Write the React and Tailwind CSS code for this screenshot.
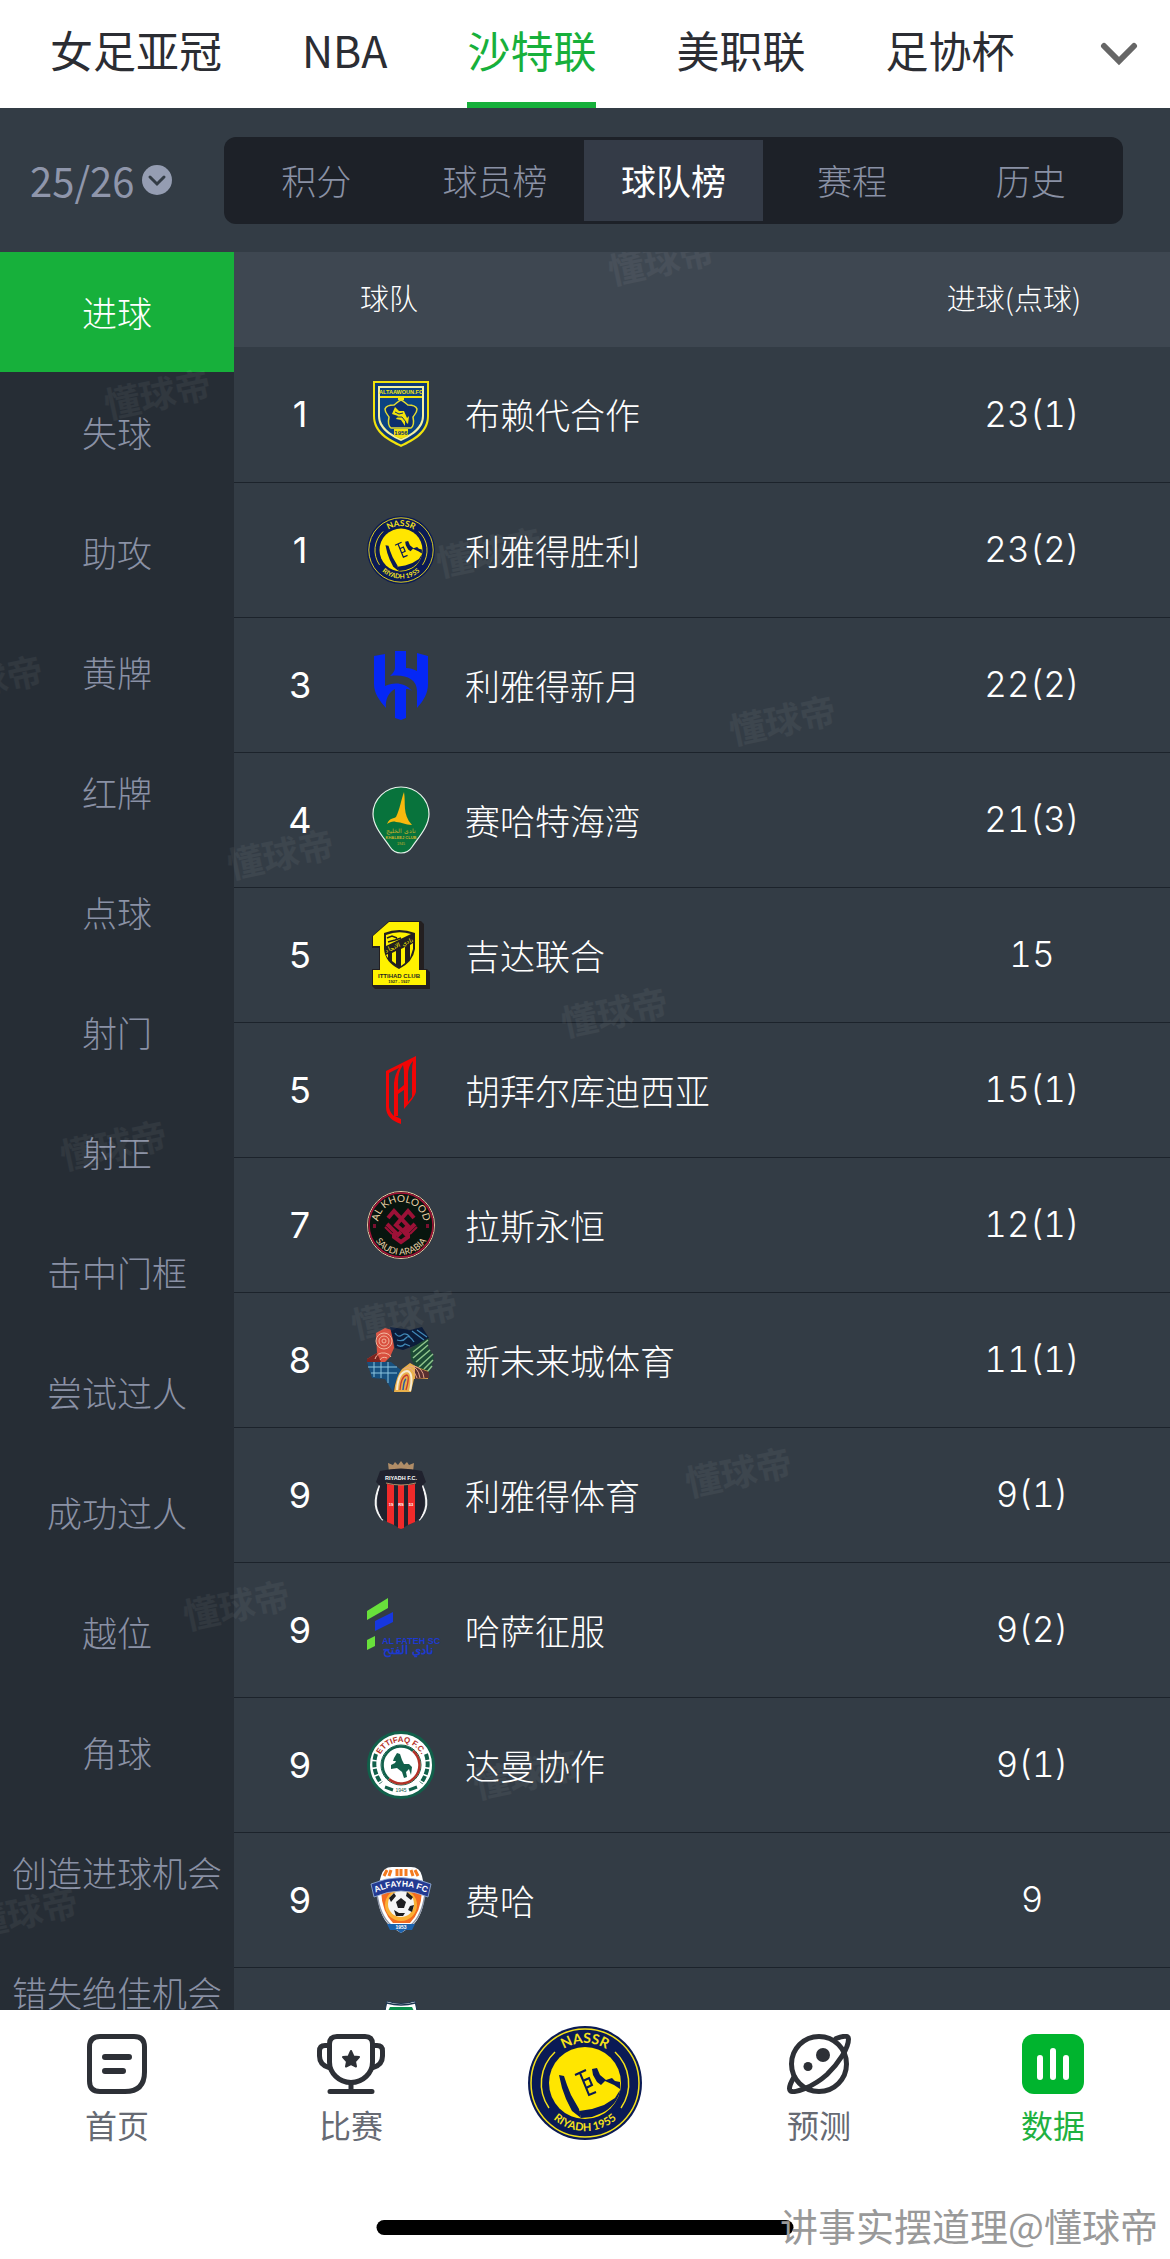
import React, { useId, useState } from 'react';

const leagues = ['女足亚冠', 'NBA', '沙特联', '美职联', '足协杯'];
const sections = ['积分', '球员榜', '球队榜', '赛程', '历史'];
const stats = [
  '进球', '失球', '助攻', '黄牌', '红牌', '点球', '射门', '射正',
  '击中门框', '尝试过人', '成功过人', '越位', '角球', '创造进球机会', '错失绝佳机会',
];

const Taawoun = () => (
  <svg viewBox="0 0 68 68" className="w-[68px] h-[68px]">
    <path d="M6 1H62V36C62 53 47 61 34 67C21 61 6 53 6 36Z" fill="#f2e30c" />
    <path d="M8 3H60V36C60 51 46 59 34 64.500C22 59 8 51 8 36Z" fill="#0d3a78" />
    <path d="M11 6H57V36C57 49 45 56 34 61C23 56 11 49 11 36Z" fill="#f6f1a0" />
    <path d="M13 8H55V36C55 47 44 54 34 59C24 54 13 47 13 36Z" fill="#0b4382" />
    <path d="M13 16H55V18H37V20H31V18H13ZM27 49H41V56L34 59L27 56Z" fill="#f2e30c" />
    <path d="M34 20C37 21 39 24 41 25C45 25 49 26 50 29C50 33 47 35 46 37C47 42 47 46 44 48H24C21 46 21 42 22 37C21 35 18 33 18 29C19 26 23 25 27 25C29 24 31 21 34 20Z" fill="#0d2f6d" stroke="#e4dc30" strokeWidth="1.500" />
    <path d="M25 34L28 27L32 31L37 31L40 38L42 36L41 44L38 41V46L34 40L29 39L31 36Z" fill="#f2e30c" />
    <path d="M28 32L32 34L36 33M30 37L35 37L39 42" stroke="#0d2f6d" fill="none" />
    <text x="34" y="14" textAnchor="middle" fontSize="5.500" fontWeight="700" fill="#f2e30c">ALTAAWOUN.FC</text>
    <text x="34" y="55" textAnchor="middle" fontSize="6" fontWeight="700" fill="#0d2f6d">1956</text>
  </svg>
);

const Nassr = ({ className }) => {
  const id = useId();
  return (
    <svg viewBox="0 0 114 114" className={className}>
      <circle cx="57" cy="57" r="57" fill="#0a1a55" />
      <circle cx="57" cy="57" r="54" fill="none" stroke="#f5e21b" strokeWidth="1.500" />
      <path d="M27 26A43 43 0 0 0 21 82M87 26A43 43 0 0 1 93 82" fill="none" stroke="#f5e21b" strokeWidth="1.500" />
      <circle cx="57" cy="57" r="36" fill="#ffe600" />
      <path d="M31 49L36 50L39 59L43 69L51 83L53 92L44 85L38 73L34 62Z" fill="#0a1a55" />
      <path d="M51 85L64 83L76 79L87 72L92 64C91 73 83 83 74 87L64 91L53 92Z" fill="#0a1a55" />
      <path d="M64 43L69 42L72 49L78 54L84 52L87 55L92 56V63L86 59L77 55L73 59L69 56L65 49Z" fill="#0a1a55" />
      <path d="M47 49L58 44M52 47L61 69L68 66M55 55L61 52L64 59L58 62" fill="none" stroke="#0a1a55" strokeWidth="2" />
      <path id={id + 'a'} d="M17 57A40 40 0 0 1 97 57" fill="none" />
      <path id={id + 'b'} d="M9 57A48 48 0 0 0 105 57" fill="none" />
      <text fontSize="14" fontWeight="700" fill="#f5e21b" textAnchor="middle" className="font-[Lato]">
        <textPath href={'#' + id + 'a'} startOffset="50%">NASSR</textPath>
      </text>
      <text fontSize="11" fontWeight="700" fill="#f5e21b" textAnchor="middle" className="font-[Lato]">
        <textPath href={'#' + id + 'b'} startOffset="50%">RIYADH 1955</textPath>
      </text>
    </svg>
  );
};

const Hilal = () => (
  <svg viewBox="0 0 68 68" className="w-[68px] h-[68px] overflow-visible" fill="#0527f5">
    <path d="M7 5L18 3V35C26 31 38 31 45 40C42 38 41 38 39 38V67L34 69L28 67V38C22 41 18 48 19 57C12 49 7 42 7 33Z" />
    <path d="M28 0H39V17C43 17 46 18 50 20V2L61 5V33C61 42 57 49 50 57V40C50 27 37 23 23 25C26 22 28 20 28 17Z" />
  </svg>
);

const Khaleej = () => (
  <svg viewBox="0 0 68 68" className="w-[68px] h-[68px]">
    <path d="M34 1C19 1 6 13 6 28C6 41 18 53 23 61C28 69 40 69 45 61C50 53 62 41 62 28C62 13 49 1 34 1Z" fill="#08733c" stroke="#e8f3ec" strokeWidth="1.200" />
    <path d="M37 6C39 17 35 28 45 39C38 39 35 36 29 36C26 35 23 36 20 38C23 31 27 33 29 31C33 23 34 14 37 6Z" fill="#f8b90e" />
    <text x="34" y="47" textAnchor="middle" fontSize="6" fill="#c9b02a">نادي الخليج</text>
    <text x="34" y="53" textAnchor="middle" fontSize="4" fontWeight="700" fill="#c9b02a">KHALEEJ CLUB</text>
    <text x="34" y="59" textAnchor="middle" fontSize="3.500" fill="#c9b02a">1945</text>
  </svg>
);

const Ittihad = () => (
  <svg viewBox="0 0 68 68" className="w-[68px] h-[68px]">
    <path d="M22 0H54L57 3V48H60L63 51V68H8L5 65V48H12V27H5V15Z" fill="#231f20" />
    <path d="M22 1H52V49H59V64H6V49H13V25H6V15Z" fill="#fff200" />
    <path d="M17 12Q32 6 48 12V28Q46 41 32 48Q18 41 17 28Z" fill="#231f20" />
    <path d="M19 14Q31 9 44 13L19 25ZM25 32L29 30V43L25 40ZM34 28L38 26V42L34 45ZM43 24L46 22V28L43 37ZM19 34L21 33V37Z" fill="#fff200" />
    <path d="M20 17L25 15L30 17M21 21L28 19L34 17" stroke="#231f20" strokeWidth="1.500" fill="none" />
    <text x="33" y="26" textAnchor="middle" fontSize="6" fill="#fff200" transform="rotate(-22 33 26)">نادي الاتحاد</text>
    <text x="32" y="57" textAnchor="middle" fontSize="6" fontWeight="800" fill="#231f20">ITTIHAD CLUB</text>
    <text x="32" y="62" textAnchor="middle" fontSize="4" fontWeight="700" fill="#231f20">1927 - 1927</text>
  </svg>
);

const Qadsiah = () => (
  <svg viewBox="0 0 68 68" className="w-[68px] h-[68px]" fill="#f20505">
    <path d="M19 15L49 0V36Q48 41 37 53V34L31 38V60H28L34 63V68C25 65 19 60 19 51ZM22 17V51Q23 57 27 60V27Q28 18 32 12ZM36 9Q31 16 31 26V34L37 29V19Q37 13 36 9ZM46 5Q41 10 41 19V46L45 41V16Q45 9 46 5Z" fillRule="evenodd" />
  </svg>
);

const Kholood = () => {
  const id = useId();
  return (
    <svg viewBox="0 0 68 68" className="w-[68px] h-[68px]">
      <circle cx="34" cy="34" r="33.500" fill="#08150e" stroke="#e9c9a4" />
      <circle cx="34" cy="34" r="32" fill="none" stroke="#a51238" strokeWidth="1.500" />
      <g fill="none" stroke="#9c1137" strokeWidth="4">
        <path d="M21 27L27 20L41 35L36 40L29 34L41 20L47 27" />
        <path d="M20 33L31 44L34 41M48 33L37 44" />
        <path d="M27 42V46L34 51L41 46V42" />
      </g>
      <path d="M18 36L25 43M50 36L43 43" stroke="#9c1137" strokeWidth="2" />
      <path d="M6 33h3v4H6zM59 33h3v4h-3z" fill="#7a1030" />
      <path id={id + 'a'} d="M11 34A23 23 0 0 1 57 34" fill="none" />
      <path id={id + 'b'} d="M4 34A30 30 0 0 0 64 34" fill="none" />
      <text fontSize="10" fill="#ecd3a9" textAnchor="middle" className="font-[Lato]">
        <textPath href={'#' + id + 'a'} startOffset="50%">AL KHOLOOD</textPath>
      </text>
      <text fontSize="9" fill="#ecd3a9" textAnchor="middle" className="font-[Lato]">
        <textPath href={'#' + id + 'b'} startOffset="50%">SAUDI ARABIA</textPath>
      </text>
    </svg>
  );
};

const Neom = () => (
  <svg viewBox="0 0 68 68" className="w-[68px] h-[68px]" fill="none">
    <path d="M9 7L18 2L25 4L27 22L23 31L18 36H0V33L10 27Z" fill="#d9503f" />
    <path d="M0 36V33L10 27L14 36Z" fill="#7c241f" />
    <g stroke="#f3b39b">
      <circle cx="17" cy="15" r="2" /><circle cx="17" cy="15" r="5" /><circle cx="17" cy="15" r="8" />
      <path d="M8 33Q10 26 18 27Q23 28 24 31M13 34Q15 30 20 32" />
    </g>
    <path d="M23 1L43 4L55 1L62 12L52 18L36 24L28 22Z" fill="#0b1c3a" />
    <path d="M28 7Q31 12 35 9T43 11M30 14Q36 16 39 12T47 16M45 5L57 14M50 4L60 11M30 19Q34 22 38 18L43 20" stroke="#3f86b4" strokeWidth="1.300" />
    <path d="M43 23L54 16L62 12L61 21L67 31L62 48L50 43L44 33Z" fill="#1c4a35" />
    <path d="M61 14L46 26M61 19L46 32M63 24L49 36M66 28L52 41M66 34L57 43M65 40L60 46" stroke="#8fc48c" strokeWidth="1.500" />
    <path d="M0 36H24L34 44L27 60L26 66L18 53L5 52Z" fill="#17507f" />
    <path d="M1 41H30M4 47H30M7 36V51M14 36V52M21 36V57" stroke="#8cc4df" />
    <path d="M35 43L43 37L50 41L61 45V53L47 53L44 66H27Q29 50 35 43Z" fill="#e8b04b" />
    <path d="M48 41L62 46V52L48 53Z" fill="#5a3030" />
    <path d="M30 64Q31 46 40 45Q47 46 43 65" stroke="#f7ead2" strokeWidth="2" />
    <path d="M33 64Q34 50 40 49Q43 50 39 64" stroke="#c73a32" strokeWidth="1.300" />
    <path d="M36 64Q37 54 39 53" stroke="#2a5aa0" strokeWidth="1.500" />
    <path d="M37 43Q45 38 50 52M42 40Q51 40 53 52M47 40Q56 42 57 52" stroke="#e9a58b" />
  </svg>
);

const RiyadhFC = () => (
  <svg viewBox="0 0 68 68" className="w-[68px] h-[68px]">
    <path d="M22 11L21 2L26 4L28 1L31 4L34 0L37 4L40 1L42 4L47 2L46 11Q34 7 22 11Z" fill="#b08d67" />
    <path d="M13 24Q3 46 16 59M55 24Q65 46 52 59" fill="none" stroke="#f5f5f5" strokeWidth="2" />
    <path d="M13 10Q34 5 55 10L59 21L55 25Q61 44 53 58L41 64L34 68L27 64L15 58Q7 44 13 25L9 21Z" fill="#20222e" />
    <path d="M20 23L27 24V64L20 61ZM31 24H37V67L34 68L31 67ZM41 24L48 23V61L41 64Z" fill="#f02a2a" />
    <path d="M19 22Q34 26 49 22" fill="none" stroke="#b08d67" />
    <text x="34" y="19" textAnchor="middle" fontSize="5.500" fontWeight="700" fill="#ffffff">RIYADH F.C.</text>
    <g fontSize="4" fontWeight="700" fill="#ffffff" textAnchor="middle">
      <text x="24" y="45">19</text><text x="34" y="45">RS</text><text x="44" y="45">53</text>
    </g>
  </svg>
);

const Fateh = () => (
  <svg viewBox="0 0 68 68" className="w-[68px] h-[68px] overflow-visible">
    <path d="M0 15L21 2V12L0 24ZM0 44L8 40V50L0 54Z" fill="#68e03b" />
    <path d="M8 25L26 16V26L8 35Z" fill="#1737df" />
    <text x="15" y="48" fontSize="9" fontWeight="700" fill="#1d39cf">AL FATEH SC</text>
    <text x="41" y="58" textAnchor="middle" fontSize="12" fontWeight="700" fill="#1d39cf">نادي الفتح</text>
  </svg>
);

const Ettifaq = () => {
  const id = useId();
  return (
    <svg viewBox="0 0 68 68" className="w-[68px] h-[68px]" fill="none">
      <circle cx="34" cy="34" r="32.500" fill="#ffffff" stroke="#11604a" strokeWidth="3" />
      <path d="M9 23Q4 38 14 52M59 23Q64 38 54 52" stroke="#11604a" strokeWidth="4" strokeDasharray="6 1.500" />
      <path d="M18 56L26 59M50 56L42 59" stroke="#11604a" strokeWidth="3" />
      <circle cx="34" cy="34" r="20" stroke="#11604a" />
      <path d="M22 48A18 18 0 0 1 46 20" stroke="#11604a" strokeWidth="2.500" />
      <path d="M46 20A18 18 0 0 1 22 48" stroke="#b23227" strokeWidth="2.500" />
      <path d="M27 27L30 22L33 23L35 29L37 33L42 33L45 36L44 44L42 38L39 41L40 46L37 47L35 41L30 37L24 38L24 34L28 32L29 30L26 30Z" fill="#11604a" />
      <path id={id} d="M11 34A23 23 0 0 1 57 34" />
      <text fontSize="8" fontWeight="800" fill="#b23227" textAnchor="middle">
        <textPath href={'#' + id} startOffset="50%">ETTIFAQ F.C.</textPath>
      </text>
      <text x="34" y="61" textAnchor="middle" fontSize="5" fill="#11604a">1945</text>
    </svg>
  );
};

const Fayha = () => {
  const id = useId();
  return (
    <svg viewBox="0 0 68 68" className="w-[68px] h-[68px]">
      <path d="M14 10Q16 1 25 1H44Q53 1 55 10L58 24Q57 49 45 60L34 67L23 60Q11 49 10 24Z" fill="#ffffff" />
      <path d="M10 28Q13 50 24 59L34 66L44 59Q55 50 58 28" fill="none" stroke="#8a93a5" strokeWidth="1.500" />
      <path d="M20 4L17 10M24 4L22 10M30 3V10M34 3V10M39 3V10M44 4L46 10M48 4L51 10" stroke="#f47b20" strokeWidth="3" />
      <path d="M14 25H55Q54 46 43 57H26Q15 46 14 25Z" fill="#f36c21" />
      <circle cx="34" cy="39" r="16" fill="#fbb034" />
      <circle cx="34" cy="38" r="13" fill="#f4f4f4" />
      <path d="M34 32L39 36L37 42H31L29 36ZM22 32L27 27L29 30L24 36ZM40 26L46 31L44 34L39 30ZM47 39L45 46L41 44L43 40ZM27 44L29 50H36L38 47L32 47Z" fill="#1d1d1f" />
      <path d="M4 18Q34 5 64 18L61 31Q34 19 7 31Z" fill="#233a92" stroke="#9cb8dc" strokeWidth="0.800" />
      <path d="M20 58H48L45 64H38L34 67L30 64H23Z" fill="#1c62ad" />
      <path id={id} d="M8 27Q34 14 60 27" fill="none" />
      <text fontSize="8.500" fontWeight="800" fill="#ffffff" textAnchor="middle">
        <textPath href={'#' + id} startOffset="50%">ALFAYHA FC</textPath>
      </text>
      <text x="34" y="63" textAnchor="middle" fontSize="5" fontWeight="700" fill="#ffffff">1953</text>
    </svg>
  );
};

const Ahli = () => (
  <svg viewBox="0 0 68 68" className="w-[68px] h-[68px]">
    <path d="M20 0Q34 5 48 0L50 10Q60 30 52 50L34 67L16 50Q8 30 18 10Z" fill="#ffffff" stroke="#1b3550" />
    <path d="M20 2Q34 6 48 2" fill="none" stroke="#1b3550" strokeWidth="1.500" />
    <path d="M23 6H45L48 12Q56 30 49 48L34 62L19 48Q12 30 20 12Z" fill="#0b8f4d" />
  </svg>
);

const teams = [
  { rank: 1, name: '布赖代合作', value: '23(1)', logo: <Taawoun /> },
  { rank: 1, name: '利雅得胜利', value: '23(2)', logo: <Nassr className="w-[68px] h-[68px]" /> },
  { rank: 3, name: '利雅得新月', value: '22(2)', logo: <Hilal /> },
  { rank: 4, name: '赛哈特海湾', value: '21(3)', logo: <Khaleej /> },
  { rank: 5, name: '吉达联合', value: '15', logo: <Ittihad /> },
  { rank: 5, name: '胡拜尔库迪西亚', value: '15(1)', logo: <Qadsiah /> },
  { rank: 7, name: '拉斯永恒', value: '12(1)', logo: <Kholood /> },
  { rank: 8, name: '新未来城体育', value: '11(1)', logo: <Neom /> },
  { rank: 9, name: '利雅得体育', value: '9(1)', logo: <RiyadhFC /> },
  { rank: 9, name: '哈萨征服', value: '9(2)', logo: <Fateh /> },
  { rank: 9, name: '达曼协作', value: '9(1)', logo: <Ettifaq /> },
  { rank: 9, name: '费哈', value: '9', logo: <Fayha /> },
  { rank: '', name: '', value: '', logo: <Ahli /> },
];

// centre points of the faint brand stamps, from the top left of the data area
const stamps = [
  [661, 6], [157, 140], [489, 298], [-11, 426], [782, 466], [280, 600], [614, 758],
  [113, 891], [404, 1060], [738, 1218], [236, 1351], [526, 1520], [24, 1658],
];

const HomeIcon = () => (
  <svg viewBox="0 0 60 60" className="w-[60px] h-[60px]" fill="none" stroke="#2d3036" strokeWidth="5" strokeLinecap="round">
    <path d="M13 2.500H47Q57.500 2.500 57.500 13V38Q57.500 57.500 38 57.500H13Q2.500 57.500 2.500 47V13Q2.500 2.500 13 2.500Z" />
    <path d="M18 23H42M18 37H36" strokeWidth="6" />
  </svg>
);

const TrophyIcon = () => (
  <svg viewBox="0 0 68 60" className="w-[68px] h-[60px]" fill="none" stroke="#2d3036" strokeWidth="5" strokeLinecap="round">
    <path d="M20 2.500H48Q55.500 2.500 55.500 10V28C55.500 39 46 48.500 34 48.500S12.500 39 12.500 28V10Q12.500 2.500 20 2.500Z" />
    <path d="M12 11.500H8Q2.500 11.500 2.500 17V22Q2.500 31 12 33.500M56 11.500H60Q65.500 11.500 65.500 17V22Q65.500 31 56 33.500" />
    <path d="M34 49V57M13 57.500H55" />
    <path d="M34 17L36.500 22.500L42 23L38 27.500L39 32.500L34 30L29 32.500L30 27.500L26 23L31.500 22.500Z" fill="#2d3036" strokeWidth="2" strokeLinejoin="round" />
  </svg>
);

const PlanetIcon = () => (
  <svg viewBox="0 0 64 60" className="w-16 h-[60px]" fill="none" stroke="#2d3036" strokeWidth="5" strokeLinecap="round">
    <circle cx="32" cy="30" r="27.500" />
    <path d="M49 4.500C56 2 61.500 1 61.500 5C61.500 14 52 29 40 40.500C26 53 8 59.500 3.500 57C1 55 4 48 7 43" />
    <circle cx="36" cy="21" r="7" fill="#2d3036" stroke="none" />
    <circle cx="21" cy="32.500" r="4.500" fill="#2d3036" stroke="none" />
  </svg>
);

const DataIcon = () => (
  <svg viewBox="0 0 62 60" className="w-[62px] h-[60px]">
    <rect width="62" height="60" rx="12" fill="#00b42e" />
    <path d="M18 24V43M31 17V43M44 24V43" stroke="#ffffff" strokeWidth="6" strokeLinecap="round" />
  </svg>
);

const navItems = [
  { label: '首页', icon: <HomeIcon /> },
  { label: '比赛', icon: <TrophyIcon /> },
  { label: '', icon: <Nassr className="w-[114px] h-[114px]" /> },
  { label: '预测', icon: <PlanetIcon /> },
  { label: '数据', icon: <DataIcon />, active: true },
];

export default function App() {
  const [league, setLeague] = useState('沙特联');
  const [section, setSection] = useState('球队榜');
  const [stat, setStat] = useState('进球');

  return (
    <div className="h-screen flex flex-col bg-[#333c45] font-['Noto_Sans_CJK_SC',sans-serif] font-light overflow-hidden">
      <header className="h-[108px] shrink-0 flex items-stretch justify-between bg-white pl-[50px] pr-8">
        <nav className="flex gap-20">
          {leagues.map((name) => (
            <button key={name} onClick={() => setLeague(name)}
              className={`border-b-6 pb-1 text-[43px] leading-[84px] font-normal whitespace-nowrap ${league === name ? 'border-[#17b03b] text-[#17b03b]' : 'border-transparent text-[#2b2d33]'}`}>
              {name}
            </button>
          ))}
        </nav>
        <button aria-label="更多联赛">
          <svg viewBox="0 0 38 24" className="w-[38px] h-6" fill="none" stroke="#666666" strokeWidth="6" strokeLinecap="round">
            <path d="M4 4L19 19L34 4" />
          </svg>
        </button>
      </header>

      <div className="h-36 shrink-0 flex items-center pr-[47px]">
        <button className="w-[224px] shrink-0 pl-[30px] flex items-center gap-2 text-[40px] leading-[60px] font-normal text-[#8f96ab]">
          25/26
          <svg viewBox="0 0 30 30" className="w-[30px] h-[30px]">
            <circle cx="15" cy="15" r="15" fill="#959db2" />
            <path d="M8 12L15 19L22 12" fill="none" stroke="#333c45" strokeWidth="3" strokeLinecap="round" />
          </svg>
        </button>
        <nav className="flex-1 h-[87px] p-[3px] flex rounded-xl bg-[#1d2128]">
          {sections.map((name) => (
            <button key={name} onClick={() => setSection(name)}
              className={`flex-1 text-[35px] ${section === name ? 'bg-[#343b47] text-white font-normal' : 'text-[#8a91a5]'}`}>
              {name}
            </button>
          ))}
        </nav>
      </div>

      <div className="relative flex-1 min-h-0 flex overflow-hidden">
        <aside className="w-[234px] shrink-0 bg-[#262d35] overflow-hidden">
          {stats.map((name) => (
            <button key={name} onClick={() => setStat(name)}
              className={`block w-full h-[120px] text-[35px] whitespace-nowrap ${stat === name ? 'bg-[#17b03b] text-white' : 'text-[#8a91a5]'}`}>
              {name}
            </button>
          ))}
        </aside>

        <main className="flex-1 min-w-0 overflow-hidden">
          <table className="w-full table-fixed text-white">
            <thead>
              <tr className="h-[95px] bg-[#3e4751] text-[29px]">
                <th className="w-[126px]" aria-label="排名" />
                <th className="text-left font-light pb-1">球队</th>
                <th className="w-[276px] text-center font-light pb-1 pr-9">进球(点球)</th>
              </tr>
            </thead>
            <tbody>
              {teams.map((team, idx) => (
                <tr key={idx} className="h-[135px] border-b-1 border-[#1c232b]">
                  <td className="pl-1.5 text-center text-4xl font-normal font-[Inter]">{team.rank}</td>
                  <td className="pl-[7px]">
                    <div className="flex items-center gap-[30px]">
                      <span className="shrink-0 font-['Liberation_Sans',sans-serif] font-normal">{team.logo}</span>
                      <span className="text-[35px] leading-[52px] whitespace-nowrap">{team.name}</span>
                    </div>
                  </td>
                  <td className="text-center text-[35px] font-[Inter] tabular-nums">{team.value}</td>
                </tr>
              ))}
            </tbody>
          </table>
        </main>

        <div aria-hidden="true" className="absolute inset-0 pointer-events-none overflow-hidden">
          {stamps.map(([x, y]) => (
            <span key={x} style={{ left: x, top: y }}
              className="absolute -translate-x-1/2 -translate-y-1/2 -rotate-12 text-4xl font-bold whitespace-nowrap text-white/5">
              懂球帝
            </span>
          ))}
        </div>
      </div>

      <footer className="relative h-[249px] shrink-0 bg-white">
        <nav className="flex pt-4">
          {navItems.map(({ label, icon, active }, idx) => (
            <a key={idx} href="#" className={`flex-1 flex flex-col items-center gap-1.5 text-[32px] leading-[48px] font-normal ${active ? 'text-[#1fb141]' : 'text-[#666a73]'} ${label ? 'pt-2' : ''}`}>
              {icon}
              {label && <span>{label}</span>}
            </a>
          ))}
        </nav>
        <div className="absolute bottom-6 left-1/2 -translate-x-1/2 w-[417px] h-[15px] rounded-full bg-black" />
        <span className="absolute bottom-1.5 right-3 text-[38px] leading-[56px] font-normal text-[#999999]">讲事实摆道理@懂球帝</span>
      </footer>
    </div>
  );
}
